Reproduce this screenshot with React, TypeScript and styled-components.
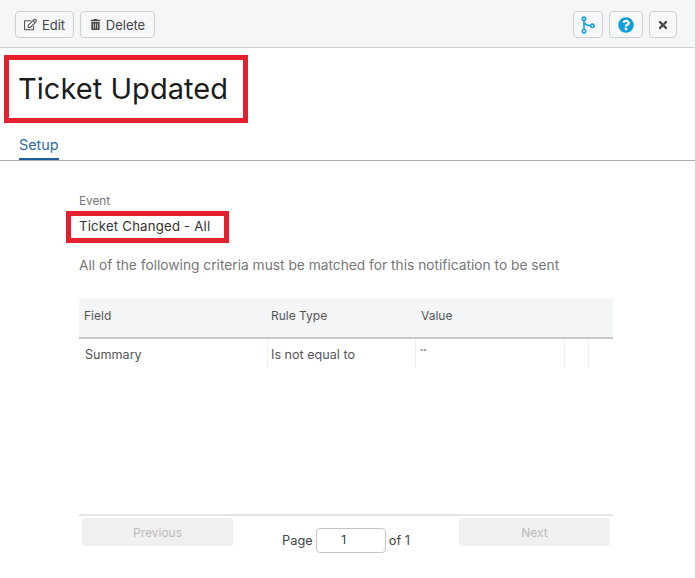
import { createGlobalStyle } from "styled-components"
import styled from "styled-components"
import { FaRegEdit, FaTrashAlt, FaQuestionCircle, FaTimes } from "react-icons/fa"

const Global = createGlobalStyle`
  html, body {
    margin: 0;
    padding: 0;
    background: #fff;
  }
  body {
    font-family: "Inter", "Open Sans", sans-serif;
    color: #333;
  }
`

const Page = styled.div`
  width: 696px;
  height: 578px;
  box-sizing: border-box;
  border-right: 1px solid #d4d4d4;
  overflow: hidden;
`

const Toolbar = styled.div`
  height: 48px;
  box-sizing: border-box;
  display: flex;
  align-items: center;
  justify-content: space-between;
  padding: 2px 18px 0 15px;
  background: #f4f6f8;
  border-bottom: 1px solid #cfd2d5;
`

const ButtonGroup = styled.div`
  display: flex;
  gap: 6px;
`

const ToolButton = styled.button<{ $width: number }>`
  width: ${(p) => p.$width}px;
  height: 27px;
  box-sizing: border-box;
  display: flex;
  align-items: center;
  justify-content: center;
  gap: 5px;
  padding: 0;
  background: #f6f7f9;
  border: 1px solid #cdd0d3;
  border-radius: 4px;
  font-family: inherit;
  font-size: 13px;
  color: #444;
  & svg {
    flex: none;
  }
`

const TitleBox = styled.div`
  width: 244px;
  height: 68px;
  box-sizing: border-box;
  margin: 7px 0 0 4px;
  padding-left: 9px;
  display: flex;
  align-items: center;
  border: 5px solid #e3202c;
`

const Title = styled.h1`
  margin: 0 0 1px;
  font-size: 29px;
  font-weight: 400;
  letter-spacing: 0.05px;
  white-space: nowrap;
  color: #1c1c1c;
`

const Tabs = styled.div`
  height: 38px;
  box-sizing: border-box;
  display: flex;
  align-items: flex-start;
  padding: 13px 0 0 19px;
  border-bottom: 1px solid #aaa;
`

const Tab = styled.div`
  height: 24px;
  box-sizing: border-box;
  border-bottom: 2px solid #1f5f99;
  font-size: 14.4px;
  line-height: 18px;
  color: #2f6ea5;
`

const Content = styled.div`
  padding: 32px 0 0 79px;
  width: 534px;
`

const EventLabel = styled.div`
  font-size: 11.8px;
  line-height: 16px;
  color: #777;
`

const EventBox = styled.div`
  width: 163px;
  height: 32px;
  box-sizing: border-box;
  margin: 2px 0 0 -13px;
  padding: 0 0 2px 8px;
  display: flex;
  align-items: center;
  border: 5px solid #e3202c;
  font-size: 13.2px;
  letter-spacing: 0.2px;
  color: #333;
  white-space: nowrap;
`

const Criteria = styled.p`
  margin: 13px 0 0;
  font-size: 13.75px;
  line-height: 18px;
  color: #777;
  white-space: nowrap;
`

const Table = styled.div`
  margin-top: 24px;
  height: 216px;
  font-size: 12px;
  border-bottom: 2px solid #e4e4e4;
`

const columns = "189px 148px 149px 24px 24px"

const HeadRow = styled.div`
  height: 41px;
  box-sizing: border-box;
  padding-bottom: 5px;
  display: grid;
  grid-template-columns: ${columns};
  align-items: center;
  background: #f4f5f7;
  border-bottom: 2px solid #c6c6c6;
  color: #555;
`

const HeadCell = styled.div<{ $inset: number }>`
  padding-left: ${(p) => p.$inset}px;
`

const Row = styled.div`
  height: 29px;
  display: grid;
  grid-template-columns: ${columns};
  color: #555;
`

const Cell = styled.div<{ $inset?: number; $small?: boolean; $last?: boolean }>`
  box-sizing: border-box;
  padding: ${(p) => (p.$small ? "6px 0 0 4px" : "8px 0 0 0")};
  padding-left: ${(p) => p.$inset ?? 0}px;
  border-right: ${(p) => (p.$last ? "none" : "1px solid #f0f0f0")};
  font-size: ${(p) => (p.$small ? "7px" : "12.6px")};
  line-height: 15px;
  white-space: nowrap;
`

const Pager = styled.div`
  display: flex;
  width: 534px;
  box-sizing: border-box;
  padding: 2px 3px 0;
  justify-content: space-between;
  align-items: flex-start;
`

const PagerButton = styled.button`
  width: 151px;
  height: 28px;
  padding: 0;
  border: none;
  border-radius: 3px;
  background: #f0f0f0;
  font-family: inherit;
  font-size: 12px;
  color: #bbb;
`

const PageJump = styled.div`
  display: flex;
  align-items: center;
  gap: 3px;
  margin-top: 10px;
  font-size: 12.8px;
  color: #444;
`

const PageInput = styled.input`
  width: 70px;
  height: 25px;
  box-sizing: border-box;
  border: 1px solid #c4c4c4;
  border-radius: 4px;
  background: #fff;
  text-align: center;
  font-family: inherit;
  font-size: 12px;
  color: #333;
  padding: 0 14px 3px 0;
  outline: none;
`

const BranchIcon = () => (
  <svg width="14" height="18" viewBox="0 0 14 18" fill="none" stroke="#1b9fd8" strokeWidth="1.6">
    <circle cx="3" cy="2.8" r="1.7" />
    <circle cx="3" cy="15.2" r="1.7" />
    <circle cx="11.4" cy="9.8" r="1.7" />
    <path d="M3 4.5V13.5M3.4 6.6C4 8.6 6.5 9.6 9.7 9.8" />
  </svg>
)

export default function App() {
  return (
    <Page>
      <Global />
      <Toolbar>
        <ButtonGroup>
          <ToolButton $width={59}>
            <FaRegEdit size={13} color="#555" />
            Edit
          </ToolButton>
          <ToolButton $width={75}>
            <FaTrashAlt size={11} color="#444" />
            Delete
          </ToolButton>
        </ButtonGroup>
        <ButtonGroup>
          <ToolButton $width={30}>
            <BranchIcon />
          </ToolButton>
          <ToolButton $width={34}>
            <FaQuestionCircle size={16} color="#0f9fdc" />
          </ToolButton>
          <ToolButton $width={28}>
            <FaTimes size={12} color="#444" />
          </ToolButton>
        </ButtonGroup>
      </Toolbar>
      <TitleBox>
        <Title>Ticket Updated</Title>
      </TitleBox>
      <Tabs>
        <Tab>Setup</Tab>
      </Tabs>
      <Content>
        <EventLabel>Event</EventLabel>
        <EventBox>Ticket Changed - All</EventBox>
        <Criteria>All of the following criteria must be matched for this notification to be sent</Criteria>
        <Table>
          <HeadRow>
            <HeadCell $inset={5}>Field</HeadCell>
            <HeadCell $inset={3}>Rule Type</HeadCell>
            <HeadCell $inset={5}>Value</HeadCell>
          </HeadRow>
          <Row>
            <Cell $inset={6}>Summary</Cell>
            <Cell $inset={3}>Is not equal to</Cell>
            <Cell $inset={4} $small>""</Cell>
            <Cell />
            <Cell $last />
          </Row>
        </Table>
        <Pager>
          <PagerButton disabled>Previous</PagerButton>
          <PageJump>
            Page
            <PageInput defaultValue="1" />
            of 1
          </PageJump>
          <PagerButton disabled>Next</PagerButton>
        </Pager>
      </Content>
    </Page>
  )
}
